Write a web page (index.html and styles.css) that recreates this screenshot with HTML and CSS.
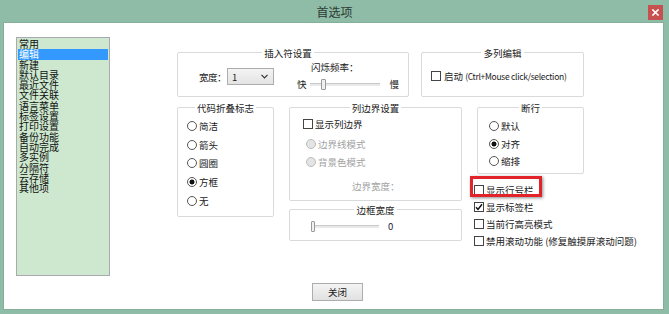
FILE: index.html
```html
<!DOCTYPE html>
<html lang="zh-CN">
<head>
<meta charset="utf-8">
<title>首选项</title>
<link rel="stylesheet" href="styles.css">
</head>
<body>
<div class="window">
  <div class="titlebar">
    <span class="tb-side"></span>
    <span class="tb-title">首选项</span>
    <span class="tb-side tb-right"><span class="close">
      <svg width="7" height="7" viewBox="0 0 7 7"><path d="M1 1 L6 6 M6 1 L1 6" stroke="#fff" stroke-width="1.6" stroke-linecap="square"/></svg>
    </span></span>
  </div>
  <div class="panel">
    <div class="main">
      <ul class="catlist">
        <li>常用</li>
        <li class="sel">编辑</li>
        <li>新建</li>
        <li>默认目录</li>
        <li>最近文件</li>
        <li>文件关联</li>
        <li>语言菜单</li>
        <li>标签设置</li>
        <li>打印设置</li>
        <li>备份功能</li>
        <li>自动完成</li>
        <li>多实例</li>
        <li>分隔符</li>
        <li>云存储</li>
        <li>其他项</li>
      </ul>
      <div class="settings">
        <div class="row-top">
          <div class="group g-caret">
            <div class="gtitle gt-shift">插入符设置</div>
            <div class="caret-body">
              <div class="width-field">
                <span class="wf-label">宽度：</span>
                <div class="select"><span>1</span>
                  <svg width="7" height="5" viewBox="0 0 7 5"><path d="M0.5 0.8 L3.5 3.8 L6.5 0.8" fill="none" stroke="#333" stroke-width="1.2"/></svg>
                </div>
              </div>
              <div class="blink">
                <div class="blink-label">闪烁频率：</div>
                <div class="slider-row">
                  <span>快</span>
                  <div class="track t-blink"><span class="thumb th-blink"></span></div>
                  <span class="slow">慢</span>
                </div>
              </div>
            </div>
          </div>
          <div class="group g-multi">
            <div class="gtitle">多列编辑</div>
            <div class="opt multi-opt"><span class="cb"></span><span class="lbl">启动 <span class="latin">(Ctrl+Mouse click/selection)</span></span></div>
          </div>
        </div>
        <div class="row-bottom">
          <div class="group g-fold">
            <div class="gtitle">代码折叠标志</div>
            <div class="radios fold-radios">
              <div class="opt"><span class="rb"></span><span class="lbl">简洁</span></div>
              <div class="opt"><span class="rb"></span><span class="lbl">箭头</span></div>
              <div class="opt"><span class="rb"></span><span class="lbl">圆圈</span></div>
              <div class="opt"><span class="rb on"></span><span class="lbl">方框</span></div>
              <div class="opt"><span class="rb"></span><span class="lbl">无</span></div>
            </div>
          </div>
          <div class="col2">
            <div class="group g-edge">
              <div class="gtitle">列边界设置</div>
              <div class="edge-body">
                <div class="opt edge-row"><span class="cb"></span><span class="lbl">显示列边界</span></div>
                <div class="opt edge-row indent"><span class="rb off"></span><span class="lbl dim">边界线模式</span></div>
                <div class="opt edge-row indent"><span class="rb off"></span><span class="lbl dim">背景色模式</span></div>
                <div class="edge-width dim">边界宽度：</div>
              </div>
            </div>
            <div class="group g-border">
              <div class="gtitle">边框宽度</div>
              <div class="border-body">
                <div class="track t-border"><span class="thumb th-border"></span></div>
                <span class="zero">0</span>
              </div>
            </div>
          </div>
          <div class="col3">
            <div class="group g-wrap">
              <div class="gtitle">断行</div>
              <div class="radios wrap-radios">
                <div class="opt"><span class="rb"></span><span class="lbl">默认</span></div>
                <div class="opt"><span class="rb on"></span><span class="lbl">对齐</span></div>
                <div class="opt"><span class="rb"></span><span class="lbl">缩排</span></div>
              </div>
            </div>
            <div class="checks">
              <div class="opt chk marked"><span class="cb"></span><span class="lbl">显示行号栏</span><span class="highlight"></span></div>
              <div class="opt chk"><span class="cb on"><svg width="8" height="8" viewBox="0 0 8 8"><path d="M1 4.2 L3 6.4 L7 1.2" fill="none" stroke="#111" stroke-width="1.5"/></svg></span><span class="lbl">显示标签栏</span></div>
              <div class="opt chk"><span class="cb"></span><span class="lbl">当前行高亮模式</span></div>
              <div class="opt chk"><span class="cb"></span><span class="lbl">禁用滚动功能 (修复触摸屏滚动问题)</span></div>
            </div>
          </div>
        </div>
      </div>
    </div>
    <div class="footer"><button class="btn">关闭</button></div>
  </div>
</div>
</body>
</html>
```

FILE: styles.css
```css
* { box-sizing: border-box; }

html, body {
  margin: 0;
  padding: 0;
  background: #8fbca6;
}

body {
  font-family: "Noto Sans CJK SC", "Noto Sans", sans-serif;
  font-size: 9.5px;
  color: #1a1a1a;
}

.window {
  width: 669px;
  height: 314px;
  background: #8fbca6;
  overflow: hidden;
}

.titlebar {
  height: 23px;
  display: grid;
  grid-template-columns: 1fr auto 1fr;
  align-items: center;
}

.tb-title {
  font-size: 12px;
  line-height: 14px;
  color: #2c3a33;
}

.tb-right {
  display: flex;
  justify-content: flex-end;
}

.close {
  width: 15px;
  height: 15px;
  margin-right: 6px;
  margin-top: 1px;
  background: #c75050;
  display: flex;
  align-items: center;
  justify-content: center;
}

.panel {
  margin: 0 6px 0 4px;
  height: 286px;
  background: #fff;
  padding: 14px 0 0 12px;
  box-shadow: 0 0 0 1px #84b09a;
}

.main {
  display: flex;
  height: 239px;
}

.catlist {
  list-style: none;
  margin: 0;
  width: 94px;
  height: 239px;
  padding: 1px 1px;
  border: 1px solid #a8aab0;
  background: #cde8cf;
  font-size: 10px;
  line-height: 10.3px;
  color: #111;
  flex-shrink: 0;
}

.catlist li {
  padding-left: 1px;
  height: 10.3px;
  white-space: nowrap;
}

.catlist li.sel {
  background: #3399ff;
  color: #fff;
}

.settings {
  margin-left: 67px;
  margin-top: 15px;
}

.group {
  border: 1px solid #d8dadc;
  border-radius: 2px;
  background: #fff;
}

.gtitle {
  display: table;
  margin: -7px auto -7px;
  padding: 0 2px;
  background: #fff;
  line-height: 14px;
  height: 14px;
  white-space: nowrap;
}

.gt-shift {
  position: relative;
  left: -5px;
}

.opt {
  display: flex;
  align-items: center;
  white-space: nowrap;
}

.lbl {
  margin-left: 2px;
  line-height: 12px;
}

.dim {
  color: #a2a2a2;
}

.cb {
  width: 10px;
  height: 10px;
  border: 1px solid #444;
  background: #fff;
  flex-shrink: 0;
  display: flex;
  align-items: center;
  justify-content: center;
}

.rb {
  width: 10px;
  height: 10px;
  border: 1px solid #555;
  border-radius: 50%;
  background: #fff;
  flex-shrink: 0;
}

.rb.on {
  background: radial-gradient(circle, #111 0 2.2px, #fff 2.8px);
}

.rb.off {
  border-color: #bcbcbc;
  background: #e4e4e4;
}

/* top row */
.row-top {
  display: flex;
  gap: 12px;
  height: 45px;
}

.g-caret {
  width: 232px;
  height: 45px;
}

.g-multi {
  width: 163px;
  height: 45px;
}

.caret-body {
  display: flex;
  align-items: flex-start;
  padding-left: 21px;
}

.width-field {
  display: flex;
  align-items: center;
  margin-top: 15px;
  flex-shrink: 0;
}

.wf-label {
  width: 28px;
  flex-shrink: 0;
  white-space: nowrap;
  line-height: 12px;
  letter-spacing: -0.5px;
}

.select {
  width: 47px;
  height: 17px;
  flex-shrink: 0;
  border: 1px solid #adadad;
  background: linear-gradient(#f3f3f3, #e4e4e4);
  display: flex;
  align-items: center;
  justify-content: space-between;
  padding: 0 5px 0 4px;
  font-size: 9.5px;
}

.blink {
  margin-left: 23px;
  display: flex;
  flex-direction: column;
  flex-shrink: 0;
}

.blink-label {
  margin-left: 14px;
  margin-top: 8px;
  line-height: 12px;
  white-space: nowrap;
}

.slider-row {
  display: flex;
  align-items: center;
  height: 12px;
  margin-top: 5px;
}

.track {
  position: relative;
  height: 3px;
  border-top: 1px solid #c9c9c9;
  background: #e9e9e9;
  flex-shrink: 0;
}

.t-blink {
  width: 70px;
  margin-left: 3px;
}

.slow {
  margin-left: 10px;
}

.thumb {
  position: absolute;
  width: 5px;
  height: 11px;
  top: -5px;
  border: 1px solid #9a9a9a;
  background: #f0f0f0;
  border-radius: 1px;
}

.th-blink {
  left: 11px;
}

.multi-opt {
  padding: 17px 0 0 9px;
}

.multi-opt .lbl {
  margin-left: 3px;
}

.latin {
  font-size: 8.5px;
  letter-spacing: -0.3px;
  color: #1a1a1a;
}

/* bottom row */
.row-bottom {
  display: flex;
  align-items: flex-start;
  margin-top: 10px;
}

.g-fold {
  width: 97px;
  height: 110px;
}

.fold-radios {
  padding: 8.5px 0 0 9px;
}

.fold-radios .opt {
  height: 18.75px;
}

.col2 {
  margin-left: 15px;
  width: 173px;
  display: flex;
  flex-direction: column;
  gap: 8px;
}

.g-edge {
  height: 94px;
}

.edge-body {
  padding: 7px 0 0 13px;
}

.edge-row {
  height: 18px;
}

.edge-row.indent {
  margin-left: 3px;
}

.edge-row:nth-child(2) {
  margin-top: 2px;
}

.edge-width {
  margin-top: 6px;
  margin-left: 49px;
  line-height: 18px;
}

.g-border {
  height: 32px;
}

.border-body {
  display: flex;
  align-items: center;
  height: 12px;
  margin-top: 10px;
  padding-left: 21px;
}

.t-border {
  width: 68px;
}

.th-border {
  left: 0;
  width: 4px;
}

.zero {
  margin-left: 9px;
  color: #1c1c3c;
  line-height: 12px;
}

.col3 {
  margin-left: 15px;
  width: 107px;
}

.g-wrap {
  width: 107px;
  height: 67px;
}

.wrap-radios {
  padding: 9.25px 0 0 11px;
}

.wrap-radios .opt {
  height: 17.5px;
}

.checks {
  margin-top: 7px;
  margin-left: -3px;
}

.chk {
  height: 17px;
}

.chk .lbl {
  margin-left: 2px;
}

.marked {
  position: relative;
}

.highlight {
  position: absolute;
  left: -4px;
  top: -5px;
  width: 72px;
  height: 21px;
  border: 3px solid #e2242a;
  box-shadow: 1px 1px 3px rgba(0, 0, 0, 0.45);
}

.footer {
  display: flex;
  justify-content: center;
  margin-top: 7px;
  padding-right: 4px;
}

.btn {
  width: 51px;
  height: 18px;
  border: 1px solid #adadad;
  border-radius: 0;
  background: linear-gradient(#f4f4f4, #e1e1e1);
  font-family: "Noto Sans CJK SC", sans-serif;
  font-size: 9.5px;
  color: #1a1a1a;
  padding: 0;
  line-height: 14px;
}
```
